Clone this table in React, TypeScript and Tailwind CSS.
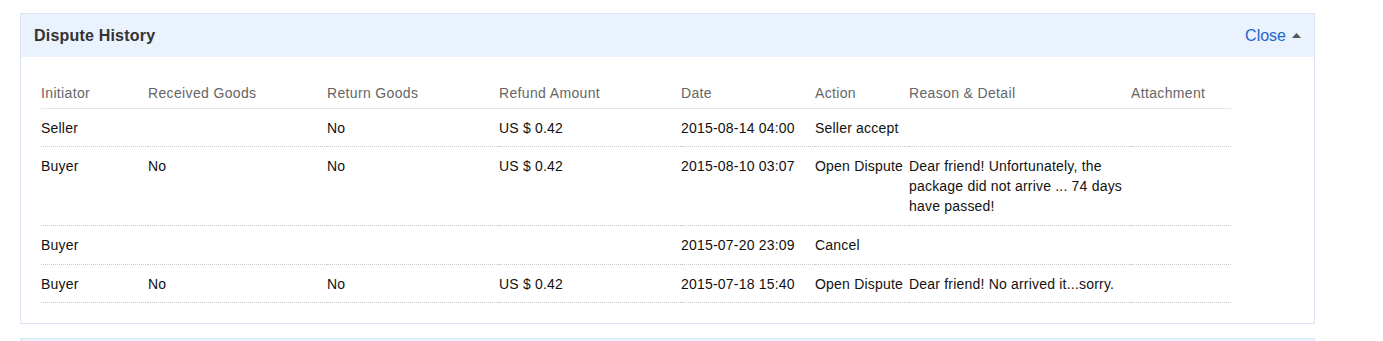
import React from "react";

const rows = [
  { pb: "pb-[8px]", cells: ["Seller", "", "No", "US $ 0.42", "2015-08-14 04:00", "Seller accept", "", ""] },
  { pb: "pb-[9px]", cells: ["Buyer", "No", "No", "US $ 0.42", "2015-08-10 03:07", "Open Dispute", "Dear friend! Unfortunately, the package did not arrive ... 74 days have passed!", ""] },
  { pb: "pb-[9px]", cells: ["Buyer", "", "", "", "2015-07-20 23:09", "Cancel", "", ""] },
  { pb: "pb-[8px]", cells: ["Buyer", "No", "No", "US $ 0.42", "2015-07-18 15:40", "Open Dispute", "Dear friend! No arrived it...sorry.", ""] },
];

const widths = ["w-[107px]", "w-[179px]", "w-[172px]", "w-[182px]", "w-[134px]", "w-[94px]", "w-[222px]", "w-[100px]"];
const heads = ["Initiator", "Received Goods", "Return Goods", "Refund Amount", "Date", "Action", "Reason & Detail", "Attachment"];

export default function App() {
  return (
    <div className="bg-white w-[1383px] h-[341px] overflow-hidden pt-[13px] pl-[20px]" style={{ fontFamily: '"Liberation Sans", Arial, sans-serif' }}>
      <div className="w-[1295px] border border-[#dbe5f3]">
        <div className="h-[43px] bg-[#eaf2fd] flex items-center justify-between pl-[13px] pr-[13px]">
          <div className="text-[16px] font-bold text-[#333] tracking-[0.2px]">Dispute History</div>
          <div className="flex items-center gap-[6px] text-[16px] text-[#1a66cc]">
            <span>Close</span>
            <svg width="9" height="5" viewBox="0 0 9 5" className="mt-[-1px]">
              <polygon points="0,5 4.5,0 9,5" fill="#555" />
            </svg>
          </div>
        </div>
        <div className="pt-[20px] pb-[20px] pl-[20px]">
          <table className="w-[1190px] table-fixed border-collapse text-[14px] leading-[20px]">
            <thead>
              <tr className="border-b border-[#e5e5e5]">
                {heads.map((h, i) => (
                  <th key={h} className={`${widths[i]} text-left font-normal text-[#666] tracking-[0.35px] pt-[6px] pb-[5px] align-top`}>{h}</th>
                ))}
              </tr>
            </thead>
            <tbody>
              {rows.map((r, idx) => (
                <tr key={idx} className="border-b border-dotted border-[#c8c8c8]">
                  {r.cells.map((c, i) => (
                    <td key={i} className={`text-[#111] tracking-[0.2px] pt-[9px] ${r.pb} align-top`}>{c}</td>
                  ))}
                </tr>
              ))}
            </tbody>
          </table>
        </div>
      </div>
      <div className="w-[1295px] mt-[14px] border border-[#dbe5f3] h-[43px] bg-[#eaf2fd]"></div>
    </div>
  );
}
